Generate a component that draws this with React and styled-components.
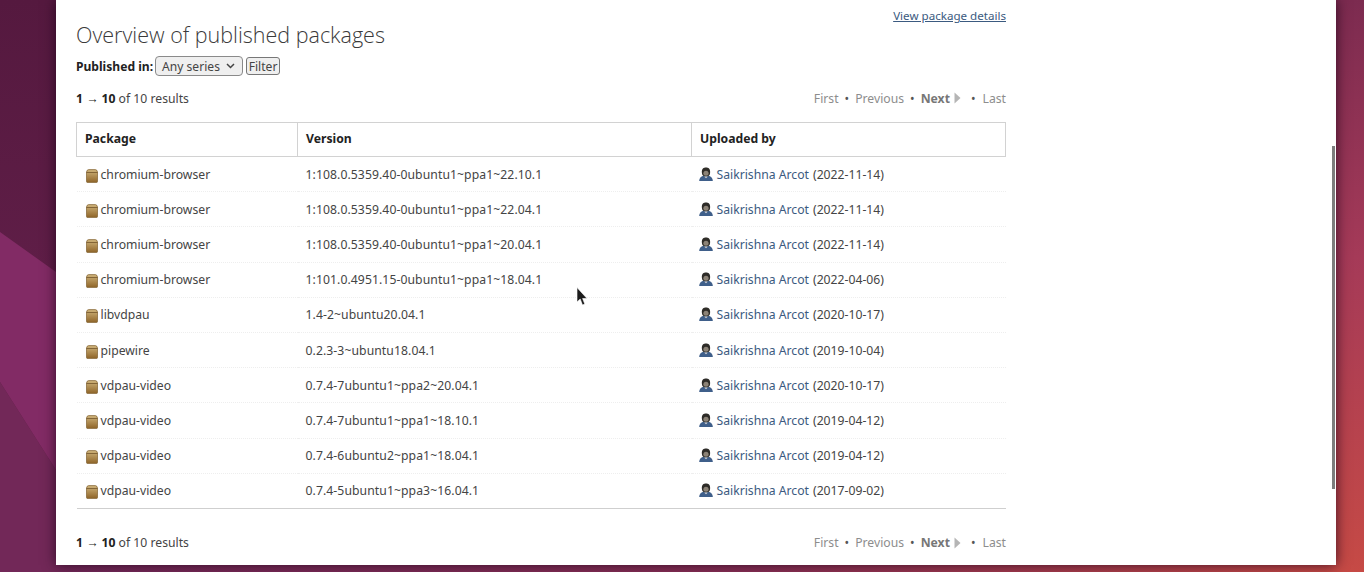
import React from "react";
import styled, { createGlobalStyle } from "styled-components";

const rows = [
  ["chromium-browser", "1:108.0.5359.40-0ubuntu1~ppa1~22.10.1", "2022-11-14"],
  ["chromium-browser", "1:108.0.5359.40-0ubuntu1~ppa1~22.04.1", "2022-11-14"],
  ["chromium-browser", "1:108.0.5359.40-0ubuntu1~ppa1~20.04.1", "2022-11-14"],
  ["chromium-browser", "1:101.0.4951.15-0ubuntu1~ppa1~18.04.1", "2022-04-06"],
  ["libvdpau", "1.4-2~ubuntu20.04.1", "2020-10-17"],
  ["pipewire", "0.2.3-3~ubuntu18.04.1", "2019-10-04"],
  ["vdpau-video", "0.7.4-7ubuntu1~ppa2~20.04.1", "2020-10-17"],
  ["vdpau-video", "0.7.4-7ubuntu1~ppa1~18.10.1", "2019-04-12"],
  ["vdpau-video", "0.7.4-6ubuntu2~ppa1~18.04.1", "2019-04-12"],
  ["vdpau-video", "0.7.4-5ubuntu1~ppa3~16.04.1", "2017-09-02"],
];

const Global = createGlobalStyle`
  html, body {
    margin: 0;
    padding: 0;
    height: 572px;
    overflow: hidden;
    background: #5a1b45;
  }
  body {
    font-family: "Noto Sans", "Open Sans", sans-serif;
    font-size: 12.2px;
    color: #333;
  }
`;

const Desktop = styled.div`
  position: relative;
  width: 1364px;
  height: 572px;
  overflow: hidden;
`;

const Wallpaper = styled.svg`
  position: absolute;
  inset: 0;
`;

const Win = styled.main`
  position: relative;
  box-sizing: border-box;
  margin-left: 56px;
  width: 1280px;
  height: 565px;
  padding: 0 20px;
  background: #fff;
  box-shadow: 0 0 12px rgba(30, 5, 25, 0.8);
`;

const Column = styled.div`
  width: 930px;
`;

const DetailsRow = styled.div`
  display: flex;
  justify-content: flex-end;
  height: 20px;
  padding-top: 8px;
  box-sizing: border-box;
`;

const DetailsLink = styled.a`
  font-size: 11.6px;
  line-height: 16px;
  color: #3b5a80;
  text-decoration: underline;
`;

const Title = styled.h1`
  margin: 0;
  font-family: "Open Sans", sans-serif;
  font-weight: 300;
  font-size: 21.5px;
  line-height: 30px;
  color: #3a3a3a;
`;

const FilterForm = styled.form`
  display: flex;
  align-items: center;
  height: 22px;
  margin-top: 5px;
  font-size: 12.1px;
`;

const Strong = styled.b`
  font-weight: 700;
  color: #222;
`;

const Select = styled.div`
  display: flex;
  align-items: center;
  justify-content: space-between;
  box-sizing: border-box;
  width: 88px;
  height: 20px;
  margin: 0 3px 0 2px;
  padding: 0 7px 0 6px;
  border: 1px solid #8a8a8a;
  border-radius: 4px;
  background: #efefef;
  color: #444;
`;

const FilterButton = styled.button`
  height: 18px;
  width: 34px;
  padding: 0;
  border: 1px solid #777;
  border-radius: 3px;
  background: #efefef;
  font: inherit;
  color: #444;
`;

const Pager = styled.div`
  display: flex;
  justify-content: space-between;
  align-items: center;
  height: 18px;
  margin-top: ${(p) => p.$top}px;
`;

const Results = styled.div`
  color: #444;
`;

const PagerLinks = styled.div`
  display: flex;
  align-items: center;
  color: #8d8d8d;
`;

const Dot = styled.span`
  margin: 0 ${(p) => p.$right}px 0 ${(p) => p.$left}px;
  color: #555;
`;

const NextLabel = styled.b`
  font-weight: 700;
  color: #777;
`;

const Arrow = styled.svg`
  margin-left: 4px;
`;

const Table = styled.table`
  width: 100%;
  margin-top: 15px;
  border-collapse: collapse;
  table-layout: fixed;
  border-bottom: 1px solid #cfcfcf;
`;

const Th = styled.th`
  box-sizing: border-box;
  height: 34px;
  padding: 0 8px 2px;
  border: 1px solid #d2d2d2;
  text-align: left;
  font-weight: 700;
  color: #222;
  width: ${(p) => (p.$w ? `${p.$w}px` : "auto")};
`;

const Tr = styled.tr`
  height: 35.2px;
  & + & td {
    border-top: 1px dotted #eeeeee;
  }
`;

const Td = styled.td`
  box-sizing: border-box;
  padding: 0 8px;
  color: #444;
  white-space: nowrap;
`;

const VersionText = styled.span`
  letter-spacing: 0.08px;
`;

const Cell = styled.span`
  display: flex;
  align-items: center;
  gap: ${(p) => p.$gap}px;
`;

const Person = styled.a`
  color: #3b5a80;
`;

const Dated = styled.span`
  color: #444;
`;

const Scrollbar = styled.div`
  position: absolute;
  left: 1276px;
  top: 146px;
  width: 3px;
  height: 343px;
  background: #7d7d7d;
`;

const Cursor = styled.svg`
  position: absolute;
  left: 520px;
  top: 287px;
`;

const BoxIcon = styled.svg`
  flex: none;
  margin: 3px 0 0 1px;
`;

const AvatarIcon = styled.svg`
  flex: none;
  margin-left: -1px;
`;

const PackageIcon = () => (
  <BoxIcon width="12" height="14" viewBox="0 0 12 14">
    <defs>
      <linearGradient id="box" x1="0" y1="0" x2="0" y2="1">
        <stop offset="0" stopColor="#d0b57c" />
        <stop offset="1" stopColor="#8f6529" />
      </linearGradient>
    </defs>
    <path d="M0.5 3 Q1 0.6 2.6 0.6 H9.4 Q11 0.6 11.5 3 V12.6 Q11.5 13.4 10.8 13.4 H1.2 Q0.5 13.4 0.5 12.6 Z" fill="url(#box)" stroke="#80602f" strokeWidth="0.7" />
    <rect x="0.5" y="3" width="11" height="1" fill="#6e5027" opacity="0.75" />
  </BoxIcon>
);

const PersonIcon = () => (
  <AvatarIcon width="14" height="15" viewBox="0 0 14 15">
    <path d="M0.2 14 C0.4 10.6 2.4 9.4 4.6 8.8 H9.4 C11.6 9.4 13.6 10.6 13.8 14 Z" fill="#3f5f8a" />
    <path d="M2.9 6 C2.4 1.6 4.8 0.6 7 0.6 C9.2 0.6 11.6 1.6 11.1 6 C10.9 8 10 9.6 7 9.6 C4 9.6 3.1 8 2.9 6 Z" fill="#2e2c28" />
    <ellipse cx="7" cy="6.2" rx="2.6" ry="2.5" fill="#8c8377" />
    <path d="M5.2 9.4 L7 11.2 L8.8 9.4 Z" fill="#d9d9d9" />
  </AvatarIcon>
);

const PagerRow = ({ top }) => (
  <Pager $top={top}>
    <Results>
      <Strong>1 → 10</Strong> of 10 results
    </Results>
    <PagerLinks>
      First<Dot $left={6} $right={6}>•</Dot>Previous<Dot $left={6} $right={6}>•</Dot>
      <NextLabel>Next</NextLabel>
      <Arrow width="7" height="12" viewBox="0 0 7 12">
        <path d="M0.5 0.5 L6.5 6 L0.5 11.5 Z" fill="#b5b5b5" />
      </Arrow>
      <Dot $left={10} $right={7}>•</Dot>Last
    </PagerLinks>
  </Pager>
);

export default function App() {
  return (
    <Desktop>
      <Global />
      <Wallpaper width="1364" height="572" viewBox="0 0 1364 572">
        <defs>
          <linearGradient id="left" x1="0" y1="0" x2="0" y2="1">
            <stop offset="0" stopColor="#55193f" />
            <stop offset="1" stopColor="#6a2350" />
          </linearGradient>
          <linearGradient id="right" x1="0" y1="0" x2="0" y2="1">
            <stop offset="0" stopColor="#7c2b50" />
            <stop offset="0.45" stopColor="#a53a58" />
            <stop offset="1" stopColor="#c64a45" />
          </linearGradient>
          <linearGradient id="floor" x1="0" y1="0" x2="1" y2="0">
            <stop offset="0" stopColor="#722858" />
            <stop offset="0.55" stopColor="#8a3055" />
            <stop offset="1" stopColor="#c64a45" />
          </linearGradient>
        </defs>
        <rect width="1364" height="572" fill="url(#left)" />
        <path d="M0 232 L56 272 V470 L0 382 Z" fill="#822b65" />
        <path d="M0 382 L56 470 V572 H0 Z" fill="#722858" />
        <rect x="1336" width="28" height="572" fill="url(#right)" />
        <rect x="56" y="560" width="1280" height="12" fill="url(#floor)" />
      </Wallpaper>
      <Win>
        <Column>
          <DetailsRow>
            <DetailsLink>View package details</DetailsLink>
          </DetailsRow>
          <Title>Overview of published packages</Title>
          <FilterForm>
            <Strong>Published in:</Strong>
            <Select>
              Any series
              <svg width="9" height="6" viewBox="0 0 9 6">
                <path d="M1 1 L4.5 4.5 L8 1" fill="none" stroke="#444" strokeWidth="1.5" />
              </svg>
            </Select>
            <FilterButton type="button">Filter</FilterButton>
          </FilterForm>
          <PagerRow top={12} />
          <Table>
            <thead>
              <tr>
                <Th $w={221}>Package</Th>
                <Th $w={394}>Version</Th>
                <Th>Uploaded by</Th>
              </tr>
            </thead>
            <tbody>
              {rows.map(([name, version, date], i) => (
                <Tr key={i}>
                  <Td>
                    <Cell $gap={3}>
                      <PackageIcon />
                      {name}
                    </Cell>
                  </Td>
                  <Td>
                    <VersionText>{version}</VersionText>
                  </Td>
                  <Td>
                    <Cell $gap={4}>
                      <PersonIcon />
                      <Person>Saikrishna Arcot</Person>
                      <Dated>({date})</Dated>
                    </Cell>
                  </Td>
                </Tr>
              ))}
            </tbody>
          </Table>
          <PagerRow top={25} />
        </Column>
        <Scrollbar />
        <Cursor width="12" height="19" viewBox="0 0 12 19">
          <path d="M1 0.5 V15 L4.2 12 L6.5 18 L8.8 17 L6.6 11.5 H11 Z" fill="#1c1c1c" stroke="#fff" strokeWidth="0.6" />
        </Cursor>
      </Win>
    </Desktop>
  );
}
